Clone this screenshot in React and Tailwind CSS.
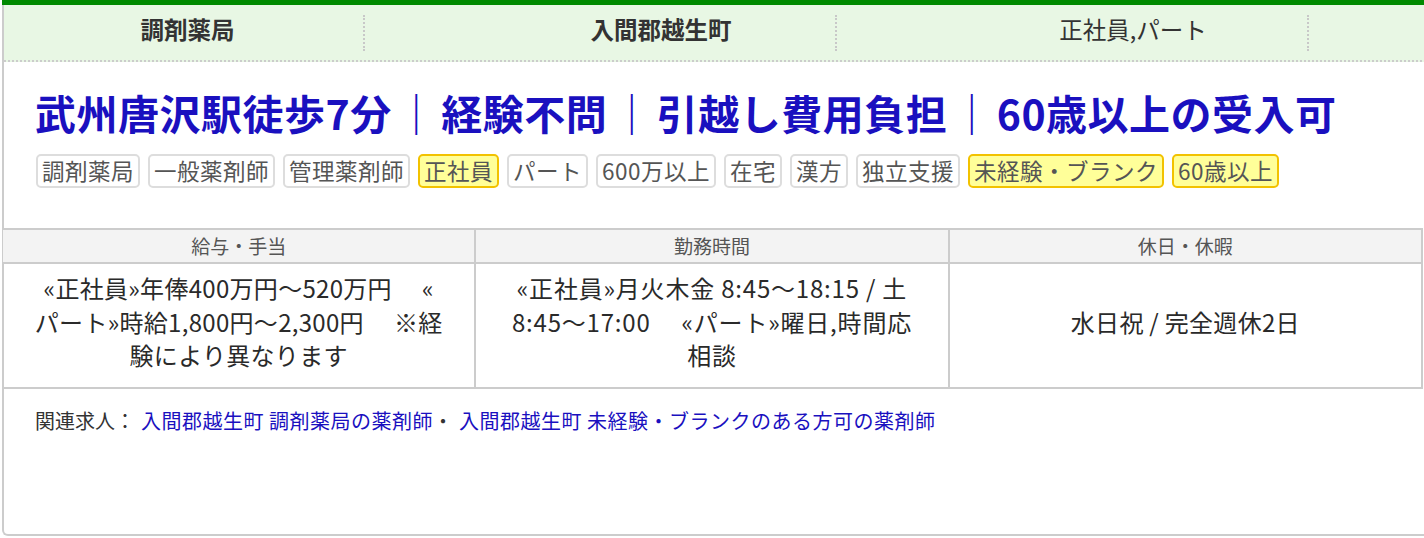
import React from 'react';

const tags = [
  { label: '調剤薬局' },
  { label: '一般薬剤師' },
  { label: '管理薬剤師' },
  { label: '正社員', hot: true },
  { label: 'パート' },
  { label: '600万以上' },
  { label: '在宅' },
  { label: '漢方' },
  { label: '独立支援' },
  { label: '未経験・ブランク', hot: true },
  { label: '60歳以上', hot: true },
];

const font = { fontFamily: '"Noto Sans CJK JP", "Noto Sans", "Liberation Sans", sans-serif' };

function HeadCell({ w, pad, children, bold, last }) {
  return (
    <div className={`${w} ${pad} shrink-0 relative flex items-center justify-center pb-[6px]`}>
      <span className={`text-[23.5px] text-[#333] ${bold ? 'font-bold' : ''}`}>{children}</span>
      {!last && <span className="absolute right-0 top-[10px] h-[36px] border-r-2 border-dotted border-[#c8c8c8]" />}
    </div>
  );
}

const Sep = () => <span className="mx-[4px]">｜</span>;

export default function App() {
  return (
    <div className="w-full h-[538px] overflow-hidden bg-white" style={font}>
      <div className="w-[1460px] h-[536px] border-l-2 border-b-2 border-[#cccccc] rounded-bl-[6px] ml-[2px] flex flex-col">
        {/* top summary strip */}
        <div className="h-[5px] bg-[#008a00] -ml-[2px]" />
        <div className="h-[57px] bg-[#e8f7e4] border-b-2 border-dotted border-[#cccccc] flex">
          <HeadCell w="w-[361px]" pad="pl-[6px]" bold>調剤薬局</HeadCell>
          <HeadCell w="w-[472px]" pad="pl-[120px]" bold>入間郡越生町</HeadCell>
          <HeadCell w="w-[472px]" pad="pl-[120px]">正社員,パート</HeadCell>
          <HeadCell w="w-[150px]" pad="" last>{''}</HeadCell>
        </div>

        <div className="pl-[31px] pt-[25px]">
          <h2 className="text-[41px] leading-[50px] font-bold text-[#1a10bf] whitespace-nowrap tracking-[0.5px]">
            武州唐沢駅徒歩7分<Sep />経験不問<Sep />引越し費用負担<Sep />60歳以上の受入可
          </h2>
          <div className="flex gap-[8px] mt-[17px] ml-[1px]">
            {tags.map((t) => (
              <span
                key={t.label}
                className={`h-[34px] px-[4px] flex items-center rounded-[5px] border-2 text-[22.5px] tracking-[0.5px] text-[#555] whitespace-nowrap ${
                  t.hot ? 'bg-[#ffff99] border-[#f2c200]' : 'bg-white border-[#dddddd]'
                }`}
              >
                {t.label}
              </span>
            ))}
          </div>
        </div>

        <div className="mt-[40px] w-[1420px] -ml-[1px]">
          <div className="grid grid-cols-3 border-t-2 border-b-2 border-[#cccccc] bg-[#f3f3f3] text-[19px] text-[#555]">
            <div className="h-[32px] flex items-center justify-center border-r-2 border-[#cccccc]">給与・手当</div>
            <div className="h-[32px] flex items-center justify-center border-r-2 border-[#cccccc]">勤務時間</div>
            <div className="h-[32px] flex items-center justify-center border-r-2 border-[#cccccc]">休日・休暇</div>
          </div>
          <div className="grid grid-cols-3 border-b-2 border-[#cccccc] text-[24px] leading-[33.5px] text-[#2a2a2a] text-center tracking-[0.3px]">
            <div className="h-[123px] pb-[8px] flex items-center justify-center border-r-2 border-[#cccccc]">
              <p className="whitespace-nowrap">
                «正社員»年俸400万円〜520万円　 «<br />
                パート»時給1,800円〜2,300円　 ※経<br />
                験により異なります
              </p>
            </div>
            <div className="h-[123px] pb-[8px] flex items-center justify-center border-r-2 border-[#cccccc]">
              <p className="whitespace-nowrap tracking-[0.8px]">
                «正社員»月火木金 8:45〜18:15 / 土<br />
                8:45〜17:00　 «パート»曜日,時間応<br />
                相談
              </p>
            </div>
            <div className="h-[123px] pb-[8px] flex items-center justify-center border-r-2 border-[#cccccc]">
              <p>水日祝 / 完全週休2日</p>
            </div>
          </div>
        </div>

        <p className="pl-[31px] mt-[18px] text-[20px] leading-[28px] text-[#333] whitespace-nowrap">
          関連求人：
          <a className="text-[#1a10bf] ml-[6px] tracking-[0.5px]">入間郡越生町 調剤薬局の薬剤師</a>
          ・
          <a className="text-[#1a10bf] ml-[6px] tracking-[0.5px]">入間郡越生町 未経験・ブランクのある方可の薬剤師</a>
        </p>
      </div>
    </div>
  );
}
